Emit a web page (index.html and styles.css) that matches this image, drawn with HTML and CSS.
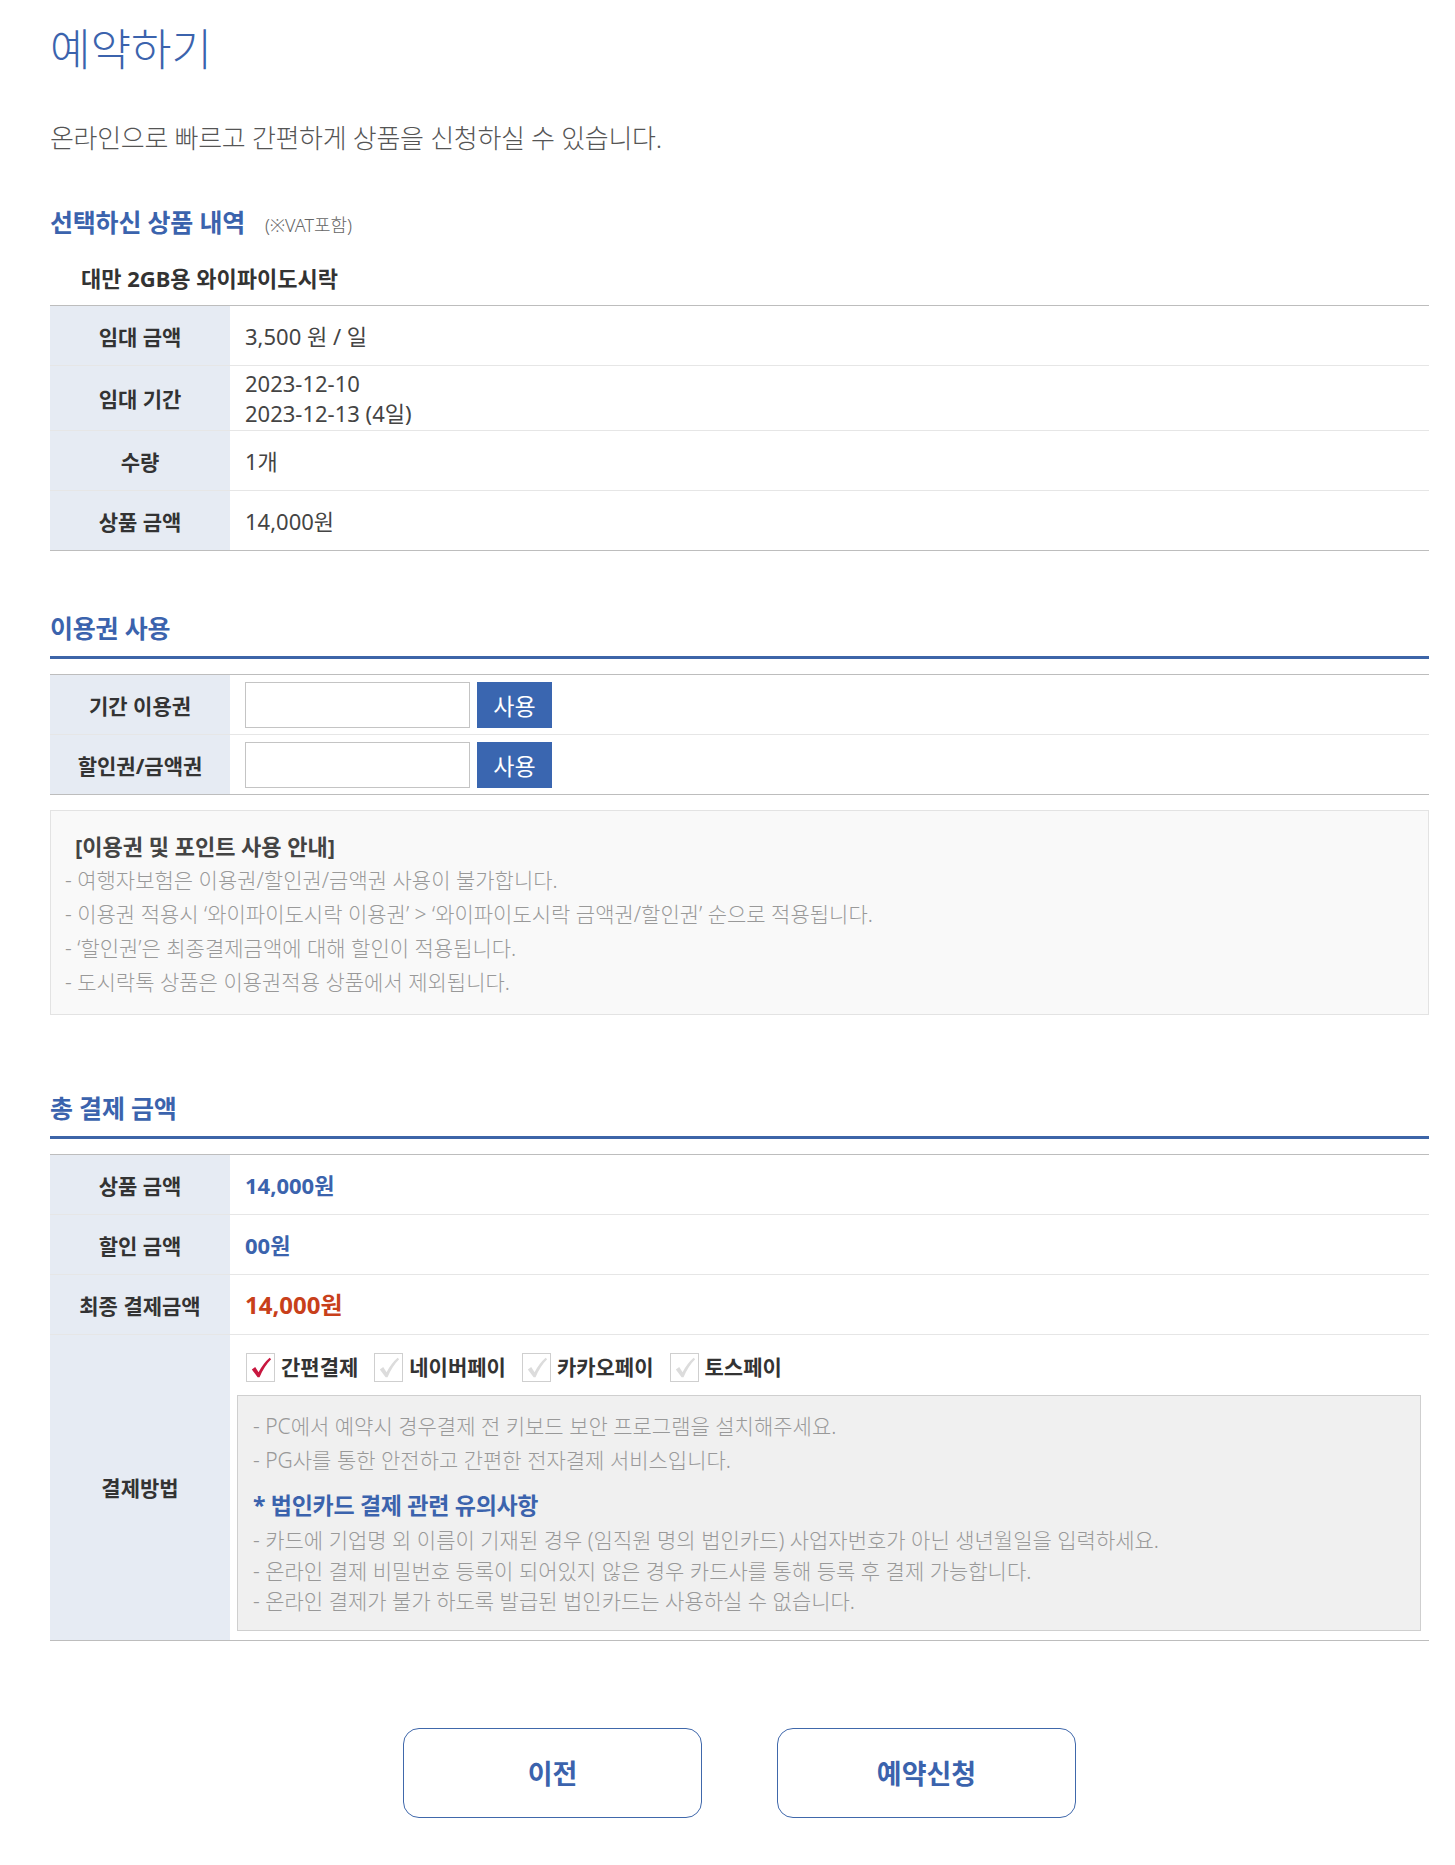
FILE: index.html
```html
<!DOCTYPE html>
<html lang="ko">
<head>
<meta charset="utf-8">
<title>예약하기</title>
<link rel="stylesheet" href="styles.css">
</head>
<body>
<div class="page">
  <h1 class="title">예약하기</h1>
  <p class="lead">온라인으로 빠르고 간편하게 상품을 신청하실 수 있습니다.</p>

  <section class="sec-first">
    <div class="head-plain">
      <h2 class="sec-title">선택하신 상품 내역</h2>
      <span class="vat">(※VAT포함)</span>
    </div>
    <div class="product">대만 2GB용 와이파이도시락</div>
    <div class="tbl">
      <div class="row"><div class="th">임대 금액</div><div class="td">3,500 원 / 일</div></div>
      <div class="row"><div class="th">임대 기간</div><div class="td"><span>2023-12-10</span><span>2023-12-13 (4일)</span></div></div>
      <div class="row"><div class="th">수량</div><div class="td">1개</div></div>
      <div class="row"><div class="th">상품 금액</div><div class="td">14,000원</div></div>
    </div>
  </section>

  <section class="sec-coupon">
    <h2 class="sec-title bar">이용권 사용</h2>
    <div class="tbl">
      <div class="row"><div class="th">기간 이용권</div><div class="td td-form"><input class="inp" type="text"><button class="btn-use" type="button">사용</button></div></div>
      <div class="row"><div class="th">할인권/금액권</div><div class="td td-form"><input class="inp" type="text"><button class="btn-use" type="button">사용</button></div></div>
    </div>
    <div class="notice">
      <p class="notice-title">[이용권 및 포인트 사용 안내]</p>
      <p class="notice-line">- 여행자보험은 이용권/할인권/금액권 사용이 불가합니다.</p>
      <p class="notice-line">- 이용권 적용시 ‘와이파이도시락 이용권’ &gt; ‘와이파이도시락 금액권/할인권’ 순으로 적용됩니다.</p>
      <p class="notice-line">- ‘할인권’은 최종결제금액에 대해 할인이 적용됩니다.</p>
      <p class="notice-line">- 도시락톡 상품은 이용권적용 상품에서 제외됩니다.</p>
    </div>
  </section>

  <section class="sec-total">
    <h2 class="sec-title bar">총 결제 금액</h2>
    <div class="tbl">
      <div class="row"><div class="th">상품 금액</div><div class="td price">14,000원</div></div>
      <div class="row"><div class="th">할인 금액</div><div class="td price">00원</div></div>
      <div class="row"><div class="th">최종 결제금액</div><div class="td final">14,000원</div></div>
      <div class="row">
        <div class="th">결제방법</div>
        <div class="td td-pay">
          <div class="pay-opts">
            <label class="opt"><span class="cb"><svg viewBox="0 0 28 28" width="28" height="28"><path d="M5 16.5 L8.5 14 L12 19.5 Q17 10 23.5 4.5 L25 6 Q18 13 13 24.5 L11 24.5 Z" fill="#c8173f"/></svg></span><span class="opt-txt">간편결제</span></label>
            <label class="opt"><span class="cb"><svg viewBox="0 0 28 28" width="28" height="28"><path d="M5 16.5 L8.5 14 L12 19.5 Q17 10 23.5 4.5 L25 6 Q18 13 13 24.5 L11 24.5 Z" fill="#dcdcdc"/></svg></span><span class="opt-txt">네이버페이</span></label>
            <label class="opt"><span class="cb"><svg viewBox="0 0 28 28" width="28" height="28"><path d="M5 16.5 L8.5 14 L12 19.5 Q17 10 23.5 4.5 L25 6 Q18 13 13 24.5 L11 24.5 Z" fill="#dcdcdc"/></svg></span><span class="opt-txt">카카오페이</span></label>
            <label class="opt"><span class="cb"><svg viewBox="0 0 28 28" width="28" height="28"><path d="M5 16.5 L8.5 14 L12 19.5 Q17 10 23.5 4.5 L25 6 Q18 13 13 24.5 L11 24.5 Z" fill="#dcdcdc"/></svg></span><span class="opt-txt">토스페이</span></label>
          </div>
          <div class="paybox">
            <p class="pb-line">- PC에서 예약시 경우결제 전 키보드 보안 프로그램을 설치해주세요.</p>
            <p class="pb-line">- PG사를 통한 안전하고 간편한 전자결제 서비스입니다.</p>
            <p class="pb-title">* 법인카드 결제 관련 유의사항</p>
            <p class="pb-line2">- 카드에 기업명 외 이름이 기재된 경우 (임직원 명의 법인카드) 사업자번호가 아닌 생년월일을 입력하세요.</p>
            <p class="pb-line2">- 온라인 결제 비밀번호 등록이 되어있지 않은 경우 카드사를 통해 등록 후 결제 가능합니다.</p>
            <p class="pb-line2">- 온라인 결제가 불가 하도록 발급된 법인카드는 사용하실 수 없습니다.</p>
          </div>
        </div>
      </div>
    </div>
  </section>

  <div class="actions">
    <button class="btn-big" type="button">이전</button>
    <button class="btn-big" type="button">예약신청</button>
  </div>
</div>
</body>
</html>
```

FILE: styles.css
```css
* { box-sizing: border-box; }
html, body { margin: 0; padding: 0; background: #fff; }
body {
  font-family: "Noto Sans", "Noto Sans CJK KR", sans-serif;
  color: #444;
}
p, h1, h2 { margin: 0; }

.page {
  width: 1379px;
  margin-left: 50px;
  padding-top: 25px;
  padding-bottom: 46px;
}

.title {
  font-size: 44px;
  line-height: 48px;
  font-weight: 300;
  letter-spacing: 0;
  color: #3b63ad;
}

.lead {
  margin-top: 50px;
  font-size: 26px;
  line-height: 30px;
  font-weight: 300;
  letter-spacing: -0.3px;
  color: #555;
}

.sec-first { margin-top: 54px; }

.head-plain {
  display: flex;
  align-items: baseline;
  gap: 20px;
}

.sec-title {
  font-size: 25px;
  line-height: 30px;
  font-weight: 700;
  letter-spacing: -0.2px;
  color: #3b63ad;
}

.sec-title.bar {
  padding-bottom: 13px;
  border-bottom: 3px solid #3d65a8;
  margin-bottom: 15px;
}

.vat {
  font-size: 18px;
  font-weight: 300;
  letter-spacing: 0;
  color: #666;
}

.product {
  margin-top: 26px;
  padding-left: 31px;
  font-size: 22px;
  line-height: 30px;
  font-weight: 700;
  letter-spacing: 0;
  color: #333;
  margin-bottom: 12px;
}

.tbl {
  border-top: 1px solid #bdbdbd;
  border-bottom: 1px solid #bdbdbd;
}

.row {
  display: grid;
  grid-template-columns: 180px 1fr;
  border-top: 1px solid #e6e6e6;
}
.row:first-child { border-top: 0; }

.th {
  background: #e6ebf3;
  display: flex;
  align-items: center;
  justify-content: center;
  font-size: 21px;
  font-weight: 700;
  letter-spacing: 0;
  color: #333;
}

.td {
  min-height: 59px;
  padding: 2px 15px;
  display: flex;
  flex-direction: column;
  justify-content: center;
  font-size: 22px;
  line-height: 30px;
  color: #444;
}

.td-form {
  flex-direction: row;
  align-items: center;
  justify-content: flex-start;
  gap: 7px;
}

.inp {
  width: 225px;
  height: 46px;
  border: 1px solid #c4c4c4;
  background: #fff;
  margin: 0;
  padding: 0 8px;
}

.btn-use {
  width: 75px;
  height: 46px;
  border: 0;
  margin: 0;
  background: #3a66b0;
  color: #fff;
  font-family: "Noto Sans", "Noto Sans CJK KR", sans-serif;
  font-size: 23px;
  letter-spacing: 0;
}

.sec-coupon { margin-top: 62px; }

.notice {
  margin-top: 15px;
  background: #f9f9f9;
  border: 1px solid #e3e3e3;
  padding: 20px 14px 15px;
}

.notice-title {
  padding-left: 10px;
  font-size: 22px;
  line-height: 30px;
  font-weight: 700;
  color: #444;
  margin-bottom: 2px;
}

.notice-line {
  font-size: 21px;
  line-height: 34px;
  font-weight: 300;
  letter-spacing: 0;
  color: #999;
}

.sec-total { margin-top: 78px; }

.price {
  font-weight: 700;
  color: #3b63ad;
}

.final {
  font-size: 24px;
  font-weight: 700;
  color: #c8401a;
}

.td-pay {
  padding: 17px 8px 9px 7px;
  justify-content: flex-start;
}

.pay-opts {
  display: flex;
  align-items: center;
  gap: 16px;
  padding-left: 9px;
  height: 30px;
}

.opt {
  display: flex;
  align-items: center;
  gap: 6px;
}

.cb {
  width: 29px;
  height: 29px;
  border: 1px solid #cfcfcf;
  background: #fff;
  display: flex;
  align-items: center;
  justify-content: center;
}
.cb svg { display: block; }

.opt-txt {
  font-size: 21px;
  line-height: 30px;
  font-weight: 700;
  letter-spacing: 0;
  color: #333;
}

.paybox {
  margin-top: 13px;
  background: #f0f0f0;
  border: 1px solid #cfcfcf;
  padding: 13px 15px 13px;
}

.pb-line {
  font-size: 21px;
  line-height: 34px;
  font-weight: 300;
  letter-spacing: 0;
  color: #999;
}

.pb-title {
  margin-top: 12px;
  margin-bottom: 4px;
  font-size: 23px;
  line-height: 32px;
  font-weight: 700;
  letter-spacing: -0.3px;
  color: #3b63ad;
}

.pb-line2 {
  font-size: 21px;
  line-height: 30.5px;
  font-weight: 300;
  letter-spacing: 0;
  color: #999;
}

.actions {
  margin-top: 87px;
  display: flex;
  justify-content: center;
  gap: 75px;
}

.btn-big {
  width: 299px;
  height: 90px;
  border: 1px solid #4068ab;
  border-radius: 16px;
  background: #fff;
  color: #3b63ad;
  font-family: "Noto Sans", "Noto Sans CJK KR", sans-serif;
  font-size: 27px;
  font-weight: 700;
  letter-spacing: 0;
  margin: 0;
  padding: 0;
}
```
